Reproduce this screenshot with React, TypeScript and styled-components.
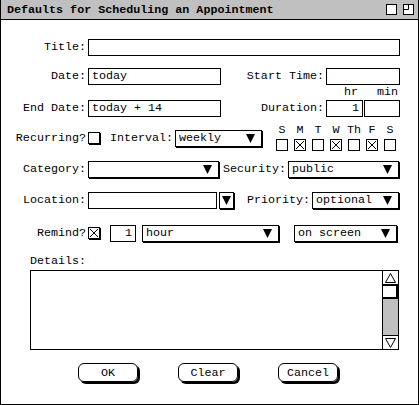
import React from 'react';
import styled, { createGlobalStyle } from 'styled-components';

const Global = createGlobalStyle`
  html, body { margin: 0; padding: 0; background: #fff; }
  body {
    font-family: "Liberation Mono", "Courier New", monospace;
    font-size: 11.7px;
    color: #000;
  }
  * { box-sizing: border-box; }
`;

const Window = styled.div`
  width: 419px;
  height: 405px;
  border: 1px solid #000;
  border-top: none;
  display: flex;
  flex-direction: column;
  background: #fff;
`;

const TitleBar = styled.div`
  height: 20px;
  flex-shrink: 0;
  background: #c0c0c0;
  border-bottom: 1px solid #000;
  display: flex;
  align-items: center;
  justify-content: space-between;
  padding: 0 4px 0 6px;
`;

const TitleText = styled.span`
  font-weight: bold;
  white-space: pre;
`;

const TitleIcons = styled.div`
  display: flex;
  gap: 6px;
  align-items: center;
`;

const Body = styled.div`
  display: flex;
  flex-direction: column;
`;

const Row = styled.div<{ $top: number; $h: number; $align?: string }>`
  display: flex;
  align-items: ${p => p.$align || 'center'};
  margin-top: ${p => p.$top}px;
  height: ${p => p.$h}px;
  flex-shrink: 0;
`;

const Label = styled.span<{ $w: number }>`
  width: ${p => p.$w}px;
  flex-shrink: 0;
  text-align: right;
  padding-right: 2px;
  white-space: pre;
  line-height: 17px;
`;

const Field = styled.div<{ $w: number; $right?: boolean; $ml?: number }>`
  width: ${p => p.$w}px;
  height: 17px;
  margin-left: ${p => p.$ml || 0}px;
  border: 1px solid #000;
  padding: 0 3px;
  line-height: 15px;
  text-align: ${p => (p.$right ? 'right' : 'left')};
  flex-shrink: 0;
  white-space: pre;
`;

const SelectBox = styled.div<{ $w: number; $ml?: number }>`
  width: ${p => p.$w}px;
  height: 17px;
  margin-left: ${p => p.$ml || 0}px;
  border: 1px solid #000;
  box-shadow: 1px 1px 0 #000;
  display: flex;
  align-items: center;
  justify-content: space-between;
  padding: 0 6px 0 3px;
  flex-shrink: 0;
  white-space: pre;
  line-height: 15px;
`;

const DropButton = styled.div<{ $ml?: number }>`
  width: 15px;
  height: 17px;
  margin-left: ${p => p.$ml || 0}px;
  border: 1px solid #000;
  box-shadow: 1px 1px 0 #000;
  display: flex;
  align-items: center;
  justify-content: center;
  flex-shrink: 0;
`;

const Box = styled.span<{ $shadow?: boolean; $ml?: number }>`
  display: block;
  width: 12px;
  height: 12px;
  margin-left: ${p => p.$ml || 0}px;
  border: 1px solid #000;
  box-shadow: ${p => (p.$shadow ? '1px 1px 0 #000' : 'none')};
  flex-shrink: 0;
  position: relative;
`;

const Spacer = styled.span<{ $w: number }>`
  width: ${p => p.$w}px;
  flex-shrink: 0;
`;

const DurCol = styled.div<{ $w: number; $ml?: number; $pr: number }>`
  display: flex;
  flex-direction: column;
  width: ${p => p.$w}px;
  margin-left: ${p => p.$ml || 0}px;
  flex-shrink: 0;
  & > span {
    height: 12px;
    line-height: 12px;
    margin-bottom: 2px;
    text-align: right;
    padding-right: ${p => p.$pr}px;
  }
`;

const DayGroup = styled.div<{ $ml: number }>`
  display: grid;
  grid-template-columns: repeat(7, 12px);
  grid-template-rows: 13px 12px;
  column-gap: 6px;
  row-gap: 2px;
  margin-left: ${p => p.$ml}px;
  align-self: flex-end;
  margin-bottom: 1px;
`;

const DayLetter = styled.span`
  display: flex;
  justify-content: center;
  white-space: pre;
  line-height: 13px;
`;

const DetailsLabel = styled.div`
  margin-top: 13px;
  margin-left: 29px;
  height: 12px;
  line-height: 12px;
`;

const TextArea = styled.div`
  margin-top: 3px;
  margin-left: 29px;
  width: 369px;
  height: 80px;
  border: 1px solid #000;
  display: flex;
  justify-content: flex-end;
`;

const ScrollBar = styled.div`
  width: 16px;
  border-left: 1px solid #000;
  display: flex;
  flex-direction: column;
`;

const ArrowCell = styled.div<{ $top?: boolean }>`
  height: 14px;
  flex-shrink: 0;
  display: flex;
  align-items: center;
  justify-content: center;
  ${p => (p.$top ? 'border-bottom: 1px solid #000;' : 'border-top: 1px solid #000;')}
`;

const Thumb = styled.div`
  height: 14px;
  flex-shrink: 0;
  background: #fff;
  border: 2px solid #000;
  border-left: 1px solid #000;
  border-top: 1px solid #000;
  margin-left: -1px;
`;

const Track = styled.div`
  flex: 1;
  background: #c0c0c0;
`;

const ButtonRow = styled.div`
  display: flex;
  gap: 40px;
  margin-top: 13px;
  padding-left: 77px;
`;

const Button = styled.div`
  width: 60px;
  height: 19px;
  border: 1px solid #000;
  border-radius: 6px;
  box-shadow: 2px 2px 0 #000;
  display: flex;
  align-items: center;
  justify-content: center;
  white-space: pre;
`;

const Tri = () => (
  <svg width="9" height="9" viewBox="0 0 9 9">
    <polygon points="0,0 9,0 4.5,9" fill="#000" />
  </svg>
);

const Cross = () => (
  <svg width="10" height="10" viewBox="0 0 10 10" style={{ display: 'block' }}>
    <line x1="1" y1="1" x2="9" y2="9" stroke="#000" strokeWidth="1" />
    <line x1="9" y1="1" x2="1" y2="9" stroke="#000" strokeWidth="1" />
  </svg>
);

const OutlineTri = ({ down }: { down?: boolean }) => (
  <svg width="11" height="10" viewBox="0 0 11 10">
    <polygon
      points={down ? '0.5,0.5 10.5,0.5 5.5,9.5' : '5.5,0.5 10.5,9.5 0.5,9.5'}
      fill="none"
      stroke="#000"
      strokeWidth="1"
    />
  </svg>
);

const WinIcon = ({ zoom }: { zoom?: boolean }) => (
  <svg width="11" height="11" viewBox="0 0 11 11" style={{ display: 'block' }}>
    <rect x="0.5" y="0.5" width="10" height="10" fill="#fff" stroke="#000" />
    {zoom && <path d="M5.5 0.5 V5.5 H0.5" fill="none" stroke="#000" />}
  </svg>
);

const Select = ({ w, value, ml }: { w: number; value: string; ml?: number }) => (
  <SelectBox $w={w} $ml={ml}>
    <span>{value}</span>
    <Tri />
  </SelectBox>
);

const Check = ({ checked, shadow, ml }: { checked?: boolean; shadow?: boolean; ml?: number }) => (
  <Box $shadow={shadow} $ml={ml}>{checked && <Cross />}</Box>
);

const days = ['S', 'M', 'T', 'W', 'Th', 'F', 'S'];
const dayChecked = [false, true, false, true, false, true, false];

export default function App() {
  return (
    <>
      <Global />
      <Window>
        <TitleBar>
          <TitleText>Defaults for Scheduling an Appointment</TitleText>
          <TitleIcons>
            <WinIcon />
            <WinIcon zoom />
          </TitleIcons>
        </TitleBar>
        <Body>
          <Row $top={19} $h={17}>
            <Label $w={87}>Title:</Label>
            <Field $w={312} />
          </Row>
          <Row $top={12} $h={17}>
            <Label $w={87}>Date:</Label>
            <Field $w={133}>today</Field>
            <Label $w={105}>Start Time:</Label>
            <Field $w={74} />
          </Row>
          <Row $top={1} $h={31} $align="flex-end">
            <Label $w={87}>End Date:</Label>
            <Field $w={133}>today + 14</Field>
            <Label $w={105}>Duration:</Label>
            <DurCol $w={37} $pr={5}>
              <span>hr</span>
              <Field $w={37} $right>1</Field>
            </DurCol>
            <DurCol $w={36} $ml={1} $pr={2}>
              <span>min</span>
              <Field $w={36} />
            </DurCol>
          </Row>
          <Row $top={7} $h={28}>
            <Label $w={87}>Recurring?</Label>
            <Check shadow />
            <Label $w={75}>Interval:</Label>
            <Select w={87} value="weekly" />
            <DayGroup $ml={14}>
              {days.map((d, i) => (
                <DayLetter key={'l' + i}>{d}</DayLetter>
              ))}
              {days.map((d, i) => (
                <Check key={'c' + i} checked={dayChecked[i]} />
              ))}
            </DayGroup>
          </Row>
          <Row $top={8} $h={18}>
            <Label $w={87}>Category:</Label>
            <Select w={131} value="" />
            <Label $w={69}>Security:</Label>
            <Select w={111} value="public" />
          </Row>
          <Row $top={13} $h={18}>
            <Label $w={87}>Location:</Label>
            <Field $w={129} />
            <DropButton $ml={2}>
              <Tri />
            </DropButton>
            <Label $w={78}>Priority:</Label>
            <Select w={87} value="optional" />
          </Row>
          <Row $top={15} $h={18}>
            <Label $w={87}>Remind?</Label>
            <Check checked shadow />
            <Spacer $w={10} />
            <Field $w={26} $right>1</Field>
            <Select w={137} value="hour" ml={6} />
            <Select w={103} value="on screen" ml={15} />
          </Row>
          <DetailsLabel>Details:</DetailsLabel>
          <TextArea>
            <ScrollBar>
              <ArrowCell $top>
                <OutlineTri />
              </ArrowCell>
              <Thumb />
              <Track />
              <ArrowCell>
                <OutlineTri down />
              </ArrowCell>
            </ScrollBar>
          </TextArea>
          <ButtonRow>
            <Button>OK</Button>
            <Button>Clear</Button>
            <Button>Cancel</Button>
          </ButtonRow>
        </Body>
      </Window>
    </>
  );
}
